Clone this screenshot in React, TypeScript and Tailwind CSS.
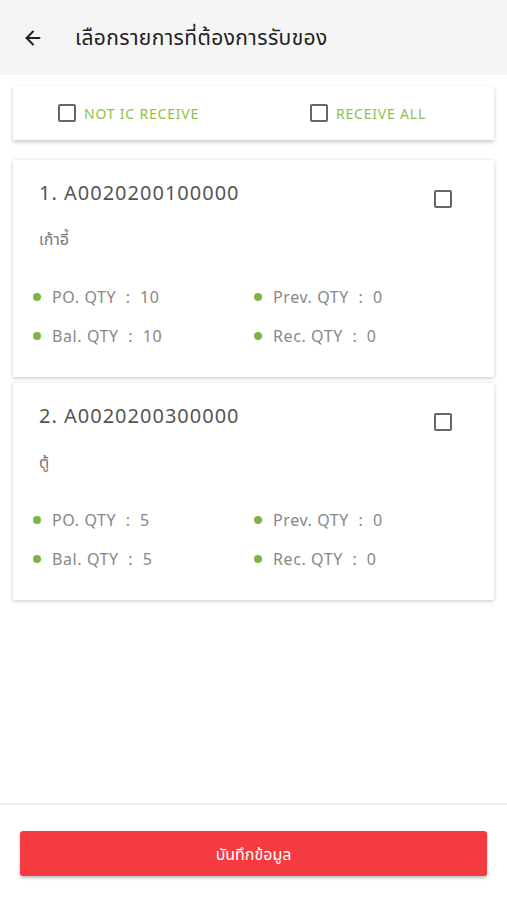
import { ArrowLeft } from "lucide-react";

const items = [
  { no: 1, code: "A0020200100000", name: "เก้าอี้", po: 10, prev: 0, bal: 10, rec: 0 },
  { no: 2, code: "A0020200300000", name: "ตู้", po: 5, prev: 0, bal: 5, rec: 0 },
];

const Box = ({ className = "" }: { className?: string }) => (
  <span className={`inline-block w-[18px] h-[18px] rounded-[2px] border-2 border-[#666] ${className}`} />
);

const Stat = ({ label, value }: { label: string; value: number }) => (
  <div className="flex items-center h-[20px]">
    <span className="w-[8px] h-[8px] rounded-full bg-[#7cb342] ml-[20px] mr-[11px]" />
    <span className="text-[16px] text-[#888] tracking-[0.6px] whitespace-pre">
      {label}  :  {value}
    </span>
  </div>
);

export default function App() {
  return (
    <div
      className="w-[507px] h-[900px] bg-white flex flex-col"
      style={{ fontFamily: '"Noto Sans", "Noto Sans Thai", "DejaVu Sans", sans-serif' }}
    >
      <header className="h-[75px] bg-[#f5f5f5] flex items-center pl-[22px] shrink-0">
        <ArrowLeft className="w-[22px] h-[22px] text-[#222]" strokeWidth={2.2} />
        <h1 className="ml-[31px] text-[21px] text-[#222] tracking-[0.4px]">เลือกรายการที่ต้องการรับของ</h1>
      </header>

      <div className="flex-1 px-[13px] pt-[11px]">
        <div className="h-[54px] bg-white shadow-[0_2px_4px_rgba(0,0,0,0.22)] flex items-center">
          <label className="flex items-center ml-[45px] w-[252px]">
            <Box />
            <span className="ml-[8px] text-[14px] text-[#8bc34a] tracking-[0.8px]">NOT IC RECEIVE</span>
          </label>
          <label className="flex items-center">
            <Box />
            <span className="ml-[8px] text-[14px] text-[#8bc34a] tracking-[0.8px]">RECEIVE ALL</span>
          </label>
        </div>

        <div className="mt-[20px] flex flex-col gap-[6px]">
          {items.map((it) => (
            <div
              key={it.no}
              className="h-[217px] bg-white shadow-[0_1px_4px_rgba(0,0,0,0.22)] relative pt-[18px]"
            >
              <div className="flex justify-between pl-[26px] pr-[42px]">
                <span className="text-[20px] text-[#555] tracking-[1px]">
                  {it.no}. {it.code}
                </span>
                <Box className="mt-[12px]" />
              </div>
              <div className="pl-[26px] mt-[19px] text-[16px] text-[#777]">{it.name}</div>
              <div className="mt-[36px] grid grid-cols-[221px_1fr] gap-y-[19px]">
                <Stat label="PO. QTY" value={it.po} />
                <Stat label="Prev. QTY" value={it.prev} />
                <Stat label="Bal. QTY" value={it.bal} />
                <Stat label="Rec. QTY" value={it.rec} />
              </div>
            </div>
          ))}
        </div>
      </div>

      <footer className="h-[97px] border-t-2 border-[#eee] px-[20px] pt-[26px] shrink-0">
        <button className="w-full h-[45px] bg-[#f43b3f] rounded-[3px] shadow-[0_2px_3px_rgba(0,0,0,0.25)] text-white text-[16px]">
          บันทึกข้อมูล
        </button>
      </footer>
    </div>
  );
}
